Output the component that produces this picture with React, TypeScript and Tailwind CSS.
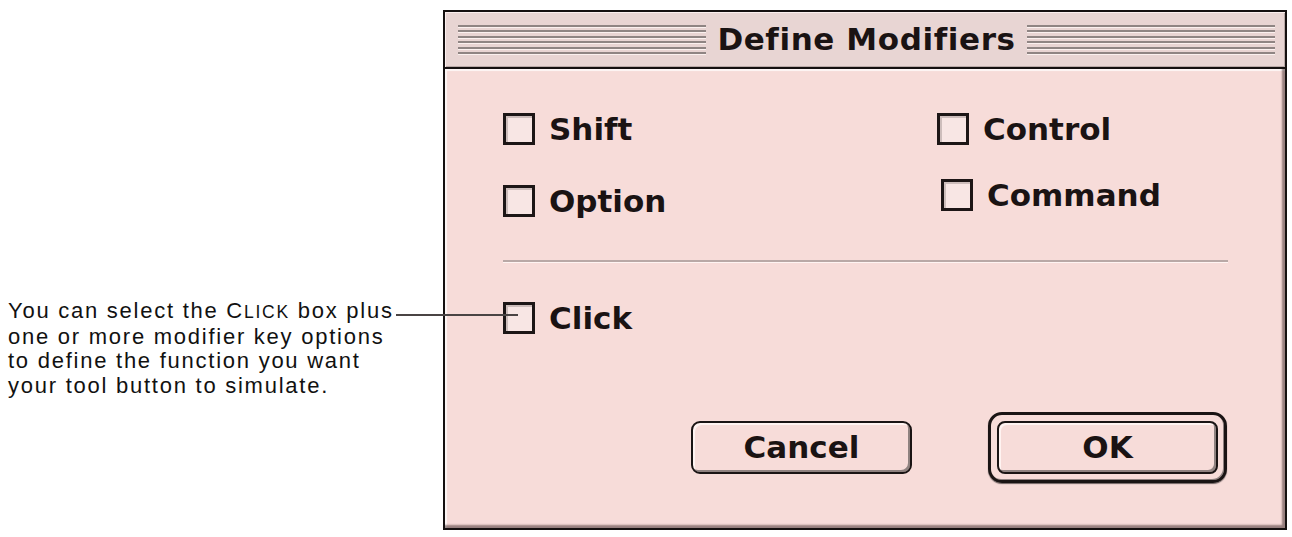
const chicago = "font-['DejaVu_Sans',sans-serif] font-bold text-[#1a1313]";

function Stripes() {
  return (
    <div className="flex-1 flex flex-col gap-[3.5px]">
      {[0, 1, 2, 3, 4, 5].map((i) => (
        <div key={i} className="h-[2px] bg-[#8f8583] shadow-[0_1px_0_#fbf1ef]" />
      ))}
    </div>
  );
}

function Checkbox({ label, className = "" }: { label: string; className?: string }) {
  return (
    <div className={`flex items-center gap-[14px] ${className}`}>
      <span className="w-[32px] h-[32px] shrink-0 border-[3px] border-[#1d1616] bg-[#f8e6e4] shadow-[inset_2px_2px_0_#cdbdbb]" />
      <span className={`${chicago} text-[31px] leading-none`}>{label}</span>
    </div>
  );
}

export default function App() {
  return (
    <div className="relative w-[1292px] h-[537px] bg-white flex overflow-hidden">
      {/* callout text */}
      <div className="w-[443px] shrink-0 pt-[299px] pl-[8px] font-['Liberation_Sans',Arial,sans-serif] text-[22px] leading-[24.6px] tracking-[1.75px] text-[#111]">
        <div>
          You can select the C<span className="text-[17.5px]">LICK</span> box plus
        </div>
        <div>one or more modifier key options</div>
        <div>to define the function you want</div>
        <div>your tool button to simulate.</div>
      </div>

      {/* leader line to the Click box */}
      <div className="absolute left-[396px] top-[314px] w-[122px] h-[1.5px] bg-[#4a4444] z-10" />

      {/* dialog window */}
      <div className="mt-[10px] w-[844px] h-[520px] border-2 border-[#151010] flex flex-col bg-[#f7dcd9]">
        {/* title bar */}
        <div className="h-[57px] shrink-0 border-b-2 border-[#151010] bg-[#e8d5d3] shadow-[inset_1px_1px_0_#fbefee,inset_-1px_-1px_0_#b9a9a7] flex items-center pl-[13px] pr-[10px]">
          <Stripes />
          <div className={`${chicago} text-[31px] tracking-[0.6px] leading-none px-[11px]`}>
            Define Modifiers
          </div>
          <Stripes />
        </div>

        {/* body */}
        <div className="flex-1 flex flex-col pl-[58px] pr-[57px] pt-[44px] shadow-[inset_-3px_-3px_2px_rgba(70,50,50,0.55),inset_2px_2px_1px_rgba(255,255,255,0.75)]">
          <div className="flex">
            <div className="w-[434px] flex flex-col gap-[40px]">
              <Checkbox label="Shift" />
              <Checkbox label="Option" />
            </div>
            <div className="flex flex-col gap-[34px]">
              <Checkbox label="Control" />
              <Checkbox label="Command" className="ml-[4px]" />
            </div>
          </div>

          <div className="mt-[43px] h-[2px] bg-[#b9a8a6] shadow-[0_1px_0_#fff4f2]" />

          <Checkbox label="Click" className="mt-[40px]" />

          {/* buttons */}
          <div className="mt-[78px] flex items-center justify-end gap-[76px] pr-[1px]">
            <button className={`${chicago} w-[221px] h-[53px] text-[31px] leading-none rounded-[9px] border-2 border-[#1a1414] bg-[#f7dcd9] shadow-[inset_-2px_-2px_0_#8f8280,inset_2px_2px_0_#fff3f1]`}>
              Cancel
            </button>
            <div className="w-[239px] h-[71px] rounded-[14px] border-[3px] border-[#1a1414] shadow-[inset_-1px_-1px_0_#8f8280,0_1px_1px_#6d6160] p-[6px]">
              <button className={`${chicago} w-full h-full text-[31px] leading-none rounded-[8px] border-2 border-[#1a1414] bg-[#f7dcd9] shadow-[inset_-2px_-2px_0_#8f8280,inset_2px_2px_0_#fff3f1]`}>
                OK
              </button>
            </div>
          </div>
        </div>
      </div>
    </div>
  );
}
